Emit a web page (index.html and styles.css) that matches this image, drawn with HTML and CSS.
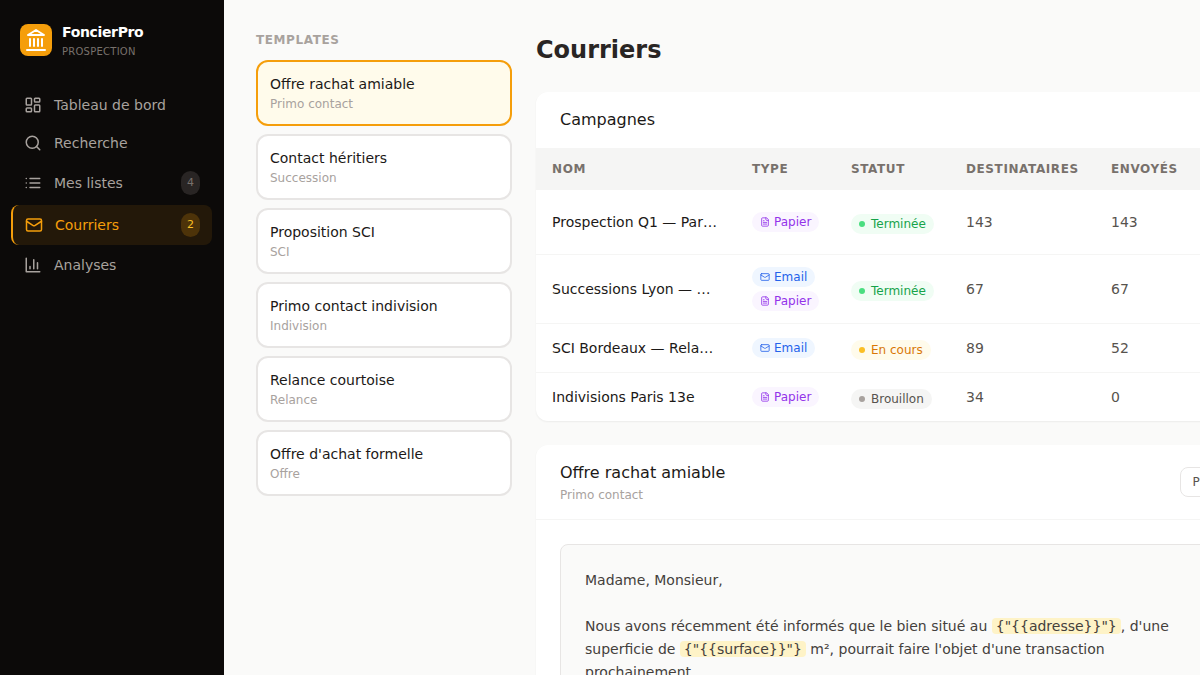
FILE: index.html
```html
<!DOCTYPE html>
<html lang="fr">
<head>
    <meta charset="UTF-8">
    <meta name="viewport" content="width=device-width, initial-scale=1.0">
    <title>FoncierPro - Courriers</title>
    <link rel="stylesheet" href="styles.css">
</head>
<body>

    <!-- Shared icons -->
    <svg class="sprite" aria-hidden="true">
        <symbol id="icon-mail" viewBox="0 0 24 24">
            <rect x="2" y="4" width="20" height="16" rx="2"/>
            <path d="m22 7-8.97 5.7a1.94 1.94 0 0 1-2.06 0L2 7"/>
        </symbol>
        <symbol id="icon-file" viewBox="0 0 24 24">
            <path d="M15 2H6a2 2 0 0 0-2 2v16a2 2 0 0 0 2 2h12a2 2 0 0 0 2-2V7Z"/>
            <path d="M14 2v4a2 2 0 0 0 2 2h4M10 9H8M16 13H8M16 17H8"/>
        </symbol>
    </svg>

    <!-- Sidebar -->
    <aside class="sidebar">
        <div class="brand">
            <div class="brand-logo">
                <svg viewBox="0 0 24 24"><path d="M3 22h18M6 18v-7M10 18v-7M14 18v-7M18 18v-7M12 2l8 5H4z"/></svg>
            </div>
            <div>
                <div class="brand-name">FoncierPro</div>
                <div class="brand-sub">PROSPECTION</div>
            </div>
        </div>
        <nav class="nav">
            <a href="#" class="nav-item">
                <svg class="icon" viewBox="0 0 24 24"><rect x="3" y="3" width="7" height="9" rx="1"/><rect x="14" y="3" width="7" height="5" rx="1"/><rect x="14" y="12" width="7" height="9" rx="1"/><rect x="3" y="16" width="7" height="5" rx="1"/></svg>
                <span>Tableau de bord</span>
            </a>
            <a href="#" class="nav-item">
                <svg class="icon" viewBox="0 0 24 24"><circle cx="11" cy="11" r="8"/><path d="m21 21-4.3-4.3"/></svg>
                <span>Recherche</span>
            </a>
            <a href="#" class="nav-item">
                <svg class="icon" viewBox="0 0 24 24"><path d="M8 6h13M8 12h13M8 18h13M3 6h.01M3 12h.01M3 18h.01"/></svg>
                <span>Mes listes</span>
                <span class="count">4</span>
            </a>
            <a href="#" class="nav-item active">
                <svg class="icon"><use href="#icon-mail"/></svg>
                <span>Courriers</span>
                <span class="count">2</span>
            </a>
            <a href="#" class="nav-item">
                <svg class="icon" viewBox="0 0 24 24"><path d="M3 3v18h18M18 17V9M13 17V5M8 17v-3"/></svg>
                <span>Analyses</span>
            </a>
        </nav>
    </aside>

    <main class="main">
        <!-- Templates -->
        <section class="templates">
            <h2 class="section-label">TEMPLATES</h2>
            <button type="button" class="template selected"><span class="template-name">Offre rachat amiable</span><span class="template-type">Primo contact</span></button>
            <button type="button" class="template"><span class="template-name">Contact héritiers</span><span class="template-type">Succession</span></button>
            <button type="button" class="template"><span class="template-name">Proposition SCI</span><span class="template-type">SCI</span></button>
            <button type="button" class="template"><span class="template-name">Primo contact indivision</span><span class="template-type">Indivision</span></button>
            <button type="button" class="template"><span class="template-name">Relance courtoise</span><span class="template-type">Relance</span></button>
            <button type="button" class="template"><span class="template-name">Offre d'achat formelle</span><span class="template-type">Offre</span></button>
        </section>

        <div class="content">
            <h1>Courriers</h1>

            <!-- Campaigns -->
            <section class="card">
                <h3 class="card-title">Campagnes</h3>
                <table>
                    <thead>
                        <tr>
                            <th class="col-name">NOM</th>
                            <th class="col-type">TYPE</th>
                            <th class="col-status">STATUT</th>
                            <th class="col-dest">DESTINATAIRES</th>
                            <th class="col-sent">ENVOYÉS</th>
                            <th></th>
                        </tr>
                    </thead>
                    <tbody>
                        <tr>
                            <td class="name">Prospection Q1 — Paris 11e</td>
                            <td><div class="tags"><span class="tag paper"><svg><use href="#icon-file"/></svg>Papier</span></div></td>
                            <td><span class="status done">Terminée</span></td>
                            <td>143</td>
                            <td>143</td>
                            <td></td>
                        </tr>
                        <tr>
                            <td class="name">Successions Lyon — Mars</td>
                            <td><div class="tags"><span class="tag email"><svg><use href="#icon-mail"/></svg>Email</span><span class="tag paper"><svg><use href="#icon-file"/></svg>Papier</span></div></td>
                            <td><span class="status done">Terminée</span></td>
                            <td>67</td>
                            <td>67</td>
                            <td></td>
                        </tr>
                        <tr>
                            <td class="name">SCI Bordeaux — Relance</td>
                            <td><div class="tags"><span class="tag email"><svg><use href="#icon-mail"/></svg>Email</span></div></td>
                            <td><span class="status running">En cours</span></td>
                            <td>89</td>
                            <td>52</td>
                            <td></td>
                        </tr>
                        <tr>
                            <td class="name">Indivisions Paris 13e</td>
                            <td><div class="tags"><span class="tag paper"><svg><use href="#icon-file"/></svg>Papier</span></div></td>
                            <td><span class="status draft">Brouillon</span></td>
                            <td>34</td>
                            <td>0</td>
                            <td></td>
                        </tr>
                    </tbody>
                </table>
            </section>

            <!-- Letter preview -->
            <section class="card">
                <div class="preview-header">
                    <div>
                        <h3>Offre rachat amiable</h3>
                        <p>Primo contact</p>
                    </div>
                    <button type="button" class="btn">PDF</button>
                </div>
                <div class="preview-body">
                    <div class="letter">
                        <p>Madame, Monsieur,</p>
                        <p>Nous avons récemment été informés que le bien situé au <mark>{"{{adresse}}"}</mark>, d'une superficie de <mark>{"{{surface}}"}</mark> m², pourrait faire l'objet d'une transaction prochainement.</p>
                    </div>
                </div>
            </section>
        </div>
    </main>

</body>
</html>
```
FILE: styles.css
```css
* { box-sizing: border-box; margin: 0; padding: 0; }

body {
    display: flex;
    height: 100vh;
    overflow: hidden;
    background: #fafaf9;
    color: #1c1917;
    font-family: "DejaVu Sans", sans-serif;
    font-size: 14px;
    line-height: 20px;
}

button { font: inherit; color: inherit; cursor: pointer; }
h1, h2, h3 { font-weight: normal; }
svg { fill: none; stroke: currentColor; stroke-linecap: round; stroke-linejoin: round; }
.sprite { display: none; }

/* Sidebar */
.sidebar { width: 224px; flex-shrink: 0; background: #0c0a09; }
.brand { display: flex; align-items: center; gap: 10px; padding: 20px 20px 24px; }
.brand-logo { display: flex; align-items: center; justify-content: center; width: 32px; height: 32px; border-radius: 8px; background: #f59e0b; color: white; }
.brand-logo svg { width: 24px; height: 24px; stroke-width: 2; }
.brand-name { color: white; font-weight: bold; letter-spacing: -0.025em; line-height: 24px; }
.brand-sub { color: #78716c; font-size: 10px; letter-spacing: 0.025em; line-height: 16px; }

.nav { display: flex; flex-direction: column; gap: 2px; padding: 3px 12px; }
.nav-item { display: flex; align-items: center; gap: 12px; padding: 8px 12px; border-radius: 8px; color: #a8a29e; text-decoration: none; }
.nav-item.active { margin-left: -1px; border-left: 2px solid #f59e0b; background: rgba(245, 158, 11, 0.1); color: #f59e0b; }
.icon { width: 18px; height: 18px; stroke-width: 2; }
.count { margin-left: auto; padding: 0 6px; border-radius: 12px; background: #292524; color: #78716c; font-size: 11px; line-height: 24px; }
.active .count { background: rgba(245, 158, 11, 0.2); color: #fbbf24; }

/* Main */
.main { display: flex; align-items: flex-start; gap: 24px; flex: 1; min-width: 0; padding: 32px; overflow: hidden; }
.templates { display: flex; flex-direction: column; gap: 8px; flex: 0 0 256px; }
.section-label { color: #a8a29e; font-size: 12px; font-weight: bold; letter-spacing: 0.05em; line-height: 16px; margin-bottom: 4px; }
.template { padding: 12px; border: 2px solid #e7e5e4; border-radius: 12px; background: white; text-align: left; }
.template.selected { border-color: #f59e0b; background: #fffbeb; }
.template span { display: block; }
.template-type { margin-top: 2px; color: #a8a29e; font-size: 12px; line-height: 16px; }

.content { flex: 1 0 717px; display: flex; flex-direction: column; gap: 24px; }
h1 { color: #292524; font-size: 24px; font-weight: bold; line-height: 36px; }
.card { border-radius: 12px; background: white; box-shadow: 0 1px 2px rgba(0, 0, 0, 0.06); overflow: hidden; }
.card-title { padding: 16px 24px; font-size: 16px; line-height: 24px; }

/* Campaign table */
table { width: 100%; table-layout: fixed; border-collapse: separate; border-spacing: 0; }
th { padding: 12px 16px; background: #f5f5f4; color: #78716c; font-size: 12px; letter-spacing: 0.05em; line-height: 18px; text-align: left; }
td { padding: 12px 16px; border-bottom: 1px solid #f5f5f4; color: #57534e; vertical-align: middle; }
tr:last-child td { border-bottom: none; }
tbody tr:first-child td { height: 65px; }
.col-name { width: 200px; }
.col-type { width: 99px; }
.col-status { width: 115px; }
.col-dest { width: 145px; }
.col-sent { width: 99px; }
.name { color: #1c1917; overflow: hidden; text-overflow: ellipsis; white-space: nowrap; }
.tags { display: flex; flex-direction: column; align-items: flex-start; gap: 4px; }
.tag, .status { display: inline-flex; align-items: center; padding: 2px 8px; border-radius: 10px; font-size: 12px; line-height: 16px; white-space: nowrap; }
.tag { gap: 4px; }
.tag svg { width: 10px; height: 10px; stroke-width: 2; }
.status { gap: 6px; margin-top: 4px; }
.status::before { content: ''; width: 6px; height: 6px; border-radius: 50%; background: currentColor; }
.paper { background: #faf5ff; color: #9333ea; }
.email { background: #eff6ff; color: #2563eb; }
.done { background: #f0fdf4; color: #16a34a; }
.done::before { background: #4ade80; }
.running { background: #fffbeb; color: #d97706; }
.running::before { background: #fbbf24; }
.draft { background: #f5f5f4; color: #57534e; }
.draft::before { background: #a8a29e; }

/* Letter preview */
.preview-header { display: flex; align-items: center; justify-content: space-between; padding: 16px 24px; border-bottom: 1px solid #f5f5f4; }
.preview-header h3 { font-size: 16px; line-height: 24px; }
.preview-header p { margin-top: 2px; color: #a8a29e; font-size: 12px; line-height: 16px; }
.btn { padding: 5px 12px; border: 1px solid #e7e5e4; border-radius: 8px; background: white; color: #57534e; font-size: 12px; line-height: 18px; }
.preview-body { padding: 24px; }
.letter { display: flex; flex-direction: column; gap: 23px; padding: 24px; border: 1px solid #e7e5e4; border-radius: 8px; background: #fafaf9; color: #44403c; line-height: 23px; }
mark { padding: 0 4px; border-radius: 4px; background: #fef3c7; color: inherit; }
```
